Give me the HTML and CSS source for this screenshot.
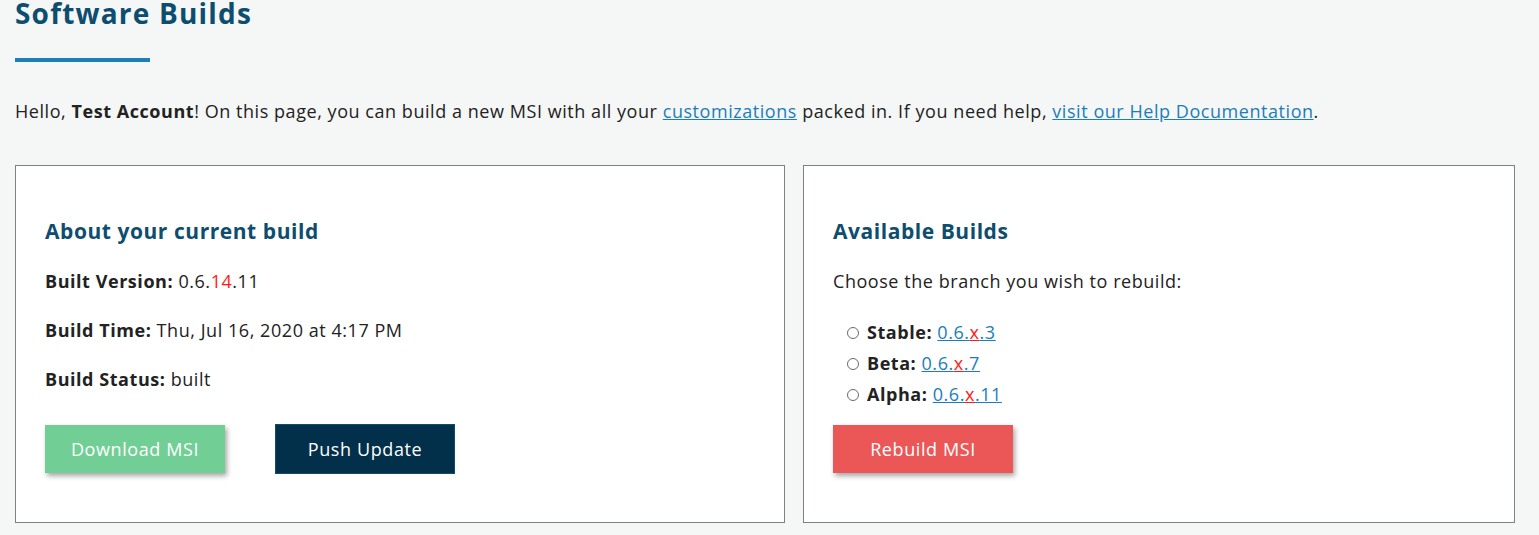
FILE: index.html
```html
<!DOCTYPE html>
<html lang="en">
<head>
<meta charset="utf-8">
<title>Software Builds</title>
<link rel="stylesheet" href="styles.css">
</head>
<body>
<main class="page">
  <h1 class="page-title">Software Builds</h1>
  <div class="title-bar"></div>
  <p class="intro">Hello, <strong>Test Account</strong>! On this page, you can build a new MSI with all your <a href="#" class="link">customizations</a> packed in. If you need help, <a href="#" class="link">visit our Help Documentation</a>.</p>

  <div class="cards">
    <section class="card">
      <h2 class="card-title">About your current build</h2>
      <p class="row"><strong>Built Version:</strong> 0.6.<span class="hl">14</span>.11</p>
      <p class="row"><strong>Build Time:</strong> Thu, Jul 16, 2020 at 4:17 PM</p>
      <p class="row"><strong>Build Status:</strong> built</p>
      <div class="actions">
        <button class="btn btn-green">Download MSI</button>
        <button class="btn btn-dark">Push Update</button>
      </div>
    </section>

    <section class="card">
      <h2 class="card-title">Available Builds</h2>
      <p class="row">Choose the branch you wish to rebuild:</p>
      <ul class="branches">
        <li><strong>Stable:</strong> <a href="#" class="link">0.6.<span class="hl ul">x</span>.3</a></li>
        <li><strong>Beta:</strong> <a href="#" class="link">0.6.<span class="hl ul">x</span>.7</a></li>
        <li><strong>Alpha:</strong> <a href="#" class="link">0.6.<span class="hl ul">x</span>.11</a></li>
      </ul>
      <div class="actions actions-tight">
        <button class="btn btn-red">Rebuild MSI</button>
      </div>
    </section>
  </div>
</main>
</body>
</html>
```
FILE: styles.css
```css
* { box-sizing: border-box; }

html, body {
  margin: 0;
  padding: 0;
  background: #f5f7f6;
}

body {
  font-family: "Open Sans", "Liberation Sans", sans-serif;
  font-size: 18px;
  letter-spacing: 0.55px;
  color: #222222;
  overflow: hidden;
}

.page {
  width: 1515px;
  padding-left: 15px;
}

.page-title {
  margin: -4px 0 0;
  font-size: 28px;
  line-height: 34px;
  font-weight: 700;
  letter-spacing: 1.2px;
  color: #0d4d70;
}

.title-bar {
  width: 135px;
  height: 4px;
  margin-top: 28px;
  background: #1a80b6;
}

.intro {
  margin: 36px 0 0;
  line-height: 27px;
}

.intro strong,
.row strong,
.branches strong {
  font-weight: 700;
}

.link {
  color: #1b7dbd;
  text-decoration: underline;
}

.hl { color: #ff1a1a; }
.hl.ul { text-decoration: underline; }

.cards {
  display: grid;
  grid-template-columns: 770fr 712fr;
  column-gap: 18px;
  margin-top: 40px;
}

.card {
  background: #ffffff;
  border: 1px solid #808080;
  padding: 50px 29px 48px;
  min-height: 358px;
}

.card-title {
  margin: 0 0 22px;
  font-size: 21px;
  line-height: 30px;
  font-weight: 700;
  letter-spacing: 0.55px;
  color: #0d4d70;
}

.row {
  margin: 0 0 22px;
  line-height: 27px;
}

.branches {
  margin: 0;
  padding-left: 14px;
  list-style: none;
}

.branches li {
  line-height: 31px;
}

.branches li::before {
  content: "";
  display: inline-block;
  width: 10px;
  height: 10px;
  margin-right: 8px;
  border: 1px solid #6b6b6b;
  border-radius: 50%;
  vertical-align: 0;
}

.actions {
  display: flex;
  align-items: center;
  gap: 50px;
  margin-top: 31px;
}

.actions-tight {
  margin-top: 15px;
}

.btn {
  width: 180px;
  height: 48px;
  border: 0;
  padding: 0;
  font-family: inherit;
  font-size: 18px;
  letter-spacing: 0.6px;
  color: #ffffff;
  cursor: pointer;
}

.btn-green {
  background: #71cf96;
  box-shadow: 2px 3px 5px rgba(0, 0, 0, 0.35);
}

.btn-dark {
  height: 50px;
  background: #02304a;
  border: 1px solid #0d4d70;
}

.btn-red {
  background: #eb5757;
  box-shadow: 2px 3px 5px rgba(0, 0, 0, 0.35);
}
```
